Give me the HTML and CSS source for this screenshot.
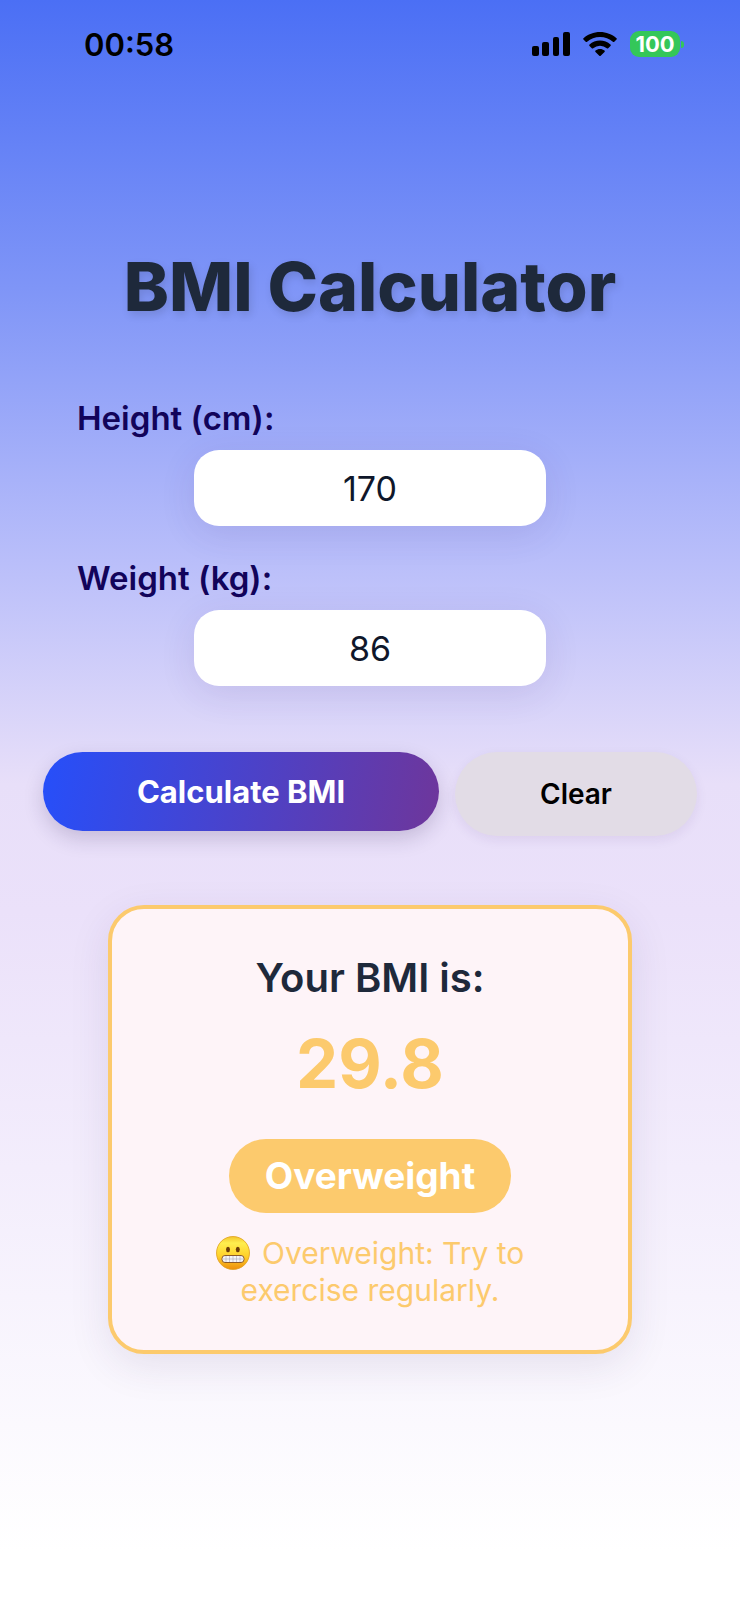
FILE: index.html
```html
<!DOCTYPE html>
<html lang="en">
<head>
<meta charset="utf-8">
<meta name="viewport" content="width=device-width, initial-scale=1">
<title>BMI Calculator</title>
<link rel="stylesheet" href="styles.css">
</head>
<body>
<header class="status">
  <time class="clock">00:58</time>
  <div class="indicators">
    <svg class="signal" viewBox="0 0 38 24" role="img" aria-label="Signal">
      <rect x="0" y="14" width="7" height="10" rx="2"/>
      <rect x="10" y="10" width="7" height="14" rx="2"/>
      <rect x="21" y="5" width="6" height="19" rx="2"/>
      <rect x="31" y="0" width="7" height="24" rx="2"/>
    </svg>
    <svg class="wifi" viewBox="0 0 34 25" role="img" aria-label="Wi-Fi">
      <path d="M17 0C10.700 0 4.900 2.300 .5 6.200q-.7.700 0 1.400l2.200 2.200q.7.600 1.400 0C7.600 6.700 12.100 5 17 5s9.400 1.700 12.900 4.800q.7.600 1.400 0l2.200-2.200q.7-.7 0-1.400C29.100 2.300 23.300 0 17 0Z"/>
      <path d="M17 8.600c-4 0-7.700 1.500-10.500 4-.5.500-.5 1 0 1.500l2.300 2.200q.7.600 1.400 0a10.200 10.200 0 0 1 13.600 0q.7.600 1.400 0l2.300-2.200c.5-.5.500-1 0-1.500-2.800-2.500-6.500-4-10.500-4Z"/>
      <path d="M17 17c-1.700 0-3.300.6-4.500 1.600-.5.500-.5 1 0 1.400l3.800 3.700q.7.600 1.400 0l3.800-3.700c.5-.4.500-.9 0-1.400C20.300 17.600 18.700 17 17 17Z"/>
    </svg>
    <div class="battery"><span class="level">100</span><span class="nub"></span></div>
  </div>
</header>
<main class="app">
  <h1 class="title">BMI Calculator</h1>
  <form class="form">
    <div class="field">
      <label class="label" for="height">Height (cm):</label>
      <input class="input" id="height" type="text" inputmode="decimal" value="170">
    </div>
    <div class="field">
      <label class="label" for="weight">Weight (kg):</label>
      <input class="input" id="weight" type="text" inputmode="decimal" value="86">
    </div>
    <div class="actions">
      <button class="button calculate" type="button">Calculate BMI</button>
      <button class="button clear" type="reset">Clear</button>
    </div>
  </form>
  <section class="result">
    <h2 class="heading">Your BMI is:</h2>
    <p class="value">29.8</p>
    <p class="badge">Overweight</p>
    <p class="advice">
      <svg class="face" viewBox="0 0 34 34" role="img" aria-label="Grimacing face">
        <defs>
          <linearGradient id="skin" x1="0" y1="0" x2="0" y2="1">
            <stop offset="0" stop-color="#f3c52c"/>
            <stop offset=".2" stop-color="#ffee4f"/>
            <stop offset=".6" stop-color="#ffd02b"/>
            <stop offset="1" stop-color="#ee8f0c"/>
          </linearGradient>
        </defs>
        <circle cx="17" cy="17" r="16.500" fill="url(#skin)" stroke="#e0a01c" stroke-width=".8"/>
        <ellipse cx="12" cy="13.500" rx="2" ry="2.700" fill="#6b3a09"/>
        <ellipse cx="21.800" cy="13.500" rx="2" ry="2.700" fill="#6b3a09"/>
        <rect x="6" y="19.500" width="22" height="7" rx="3" fill="#f6f5f8" stroke="#8d5a2a" stroke-width="1"/>
        <path d="M6.500 23H27.500M10 20v6M13.500 20v6M17 20v6M20.500 20v6M24 20v6" stroke="#aaa7b8" stroke-width=".6"/>
      </svg>
      Overweight: Try to exercise regularly.
    </p>
  </section>
</main>
</body>
</html>
```
FILE: styles.css
```css
* { box-sizing: border-box; }

body {
  margin: 0;
  min-height: 100vh;
  font-family: Inter, "Liberation Sans", sans-serif;
  color: #1e293b;
  background: linear-gradient(180deg, #4b6ff5 0%, #7f95f7 18%, #b9befa 35%, #e8dff9 49%, #ebe1fa 57%, #ffffff 97%);
}

h1, h2, p { margin: 0; }

.status {
  display: flex;
  justify-content: space-between;
  align-items: center;
  height: 88px;
  padding: 0 56px 0 84px;
  color: #000;
}

.clock { font-size: 31px; font-weight: 600; }

.indicators { display: flex; align-items: center; gap: 13px; }
.signal { width: 38px; height: 24px; }
.wifi { width: 34px; height: 25px; }
.battery { display: flex; align-items: center; gap: 1px; }

.level {
  width: 50px;
  border-radius: 9px;
  background: #34c759;
  color: #fff;
  font-size: 22px;
  font-weight: 700;
  line-height: 26px;
  text-align: center;
}

.nub { width: 3px; height: 7px; border-radius: 0 3px 3px 0; background: #34c759; }

.app { padding: 158px 43px 80px; }

.title {
  font-size: 68px;
  font-weight: 800;
  line-height: 80px;
  text-align: center;
  text-shadow: 2px 4px 8px rgb(0 0 0 / 12%);
}

.form { padding-top: 68px; }

.field {
  display: grid;
  gap: 8px;
  margin-bottom: 28px;
  padding: 0 34px;
}

.label {
  color: #12045a;
  font-size: 33px;
  font-weight: 600;
  line-height: 48px;
}

.input {
  justify-self: center;
  width: 60%;
  height: 76px;
  border: 0;
  border-radius: 25px;
  background: #fff;
  box-shadow: 0 8px 36px rgb(60 40 120 / 11%);
  color: #0f172a;
  font: 400 34px Inter, "Liberation Sans", sans-serif;
  text-align: center;
}

.actions {
  display: flex;
  align-items: flex-start;
  gap: 16px;
  padding-top: 38px;
}

.button {
  padding: 0;
  border: 0;
  border-radius: 42px;
  font-family: inherit;
}

.calculate {
  flex: 396;
  height: 79px;
  background: linear-gradient(100deg, #264ffa, #6e369b);
  box-shadow: 0 8px 20px rgb(40 20 80 / 18%);
  color: #fff;
  font-size: 31px;
  font-weight: 700;
}

.clear {
  flex: 242;
  height: 84px;
  background: #e2dce6;
  box-shadow: 0 4px 12px rgb(60 30 100 / 8%);
  color: #000;
  font-size: 28px;
  font-weight: 600;
}

.result {
  width: 80%;
  margin: 69px auto 0;
  padding: 41px 80px;
  border: 4px solid #fcca6d;
  border-radius: 36px;
  background: #fef4f8;
  box-shadow: 0 12px 40px rgb(60 40 100 / 10%);
  text-align: center;
}

.heading { font-size: 40px; font-weight: 600; line-height: 56px; }
.value { padding-top: 18px; color: #fcca6d; font-size: 67px; font-weight: 700; line-height: 80px; }

.badge {
  width: fit-content;
  margin: 35px auto 22px;
  padding: 0 36px;
  border-radius: 38px;
  background: #fcca6d;
  color: #fff;
  font-size: 37px;
  font-weight: 700;
  line-height: 74px;
}

.advice { color: #fcca6d; font-size: 30px; line-height: 37px; }
.face { width: 34px; height: 34px; margin-right: 4px; vertical-align: -6px; }
```
